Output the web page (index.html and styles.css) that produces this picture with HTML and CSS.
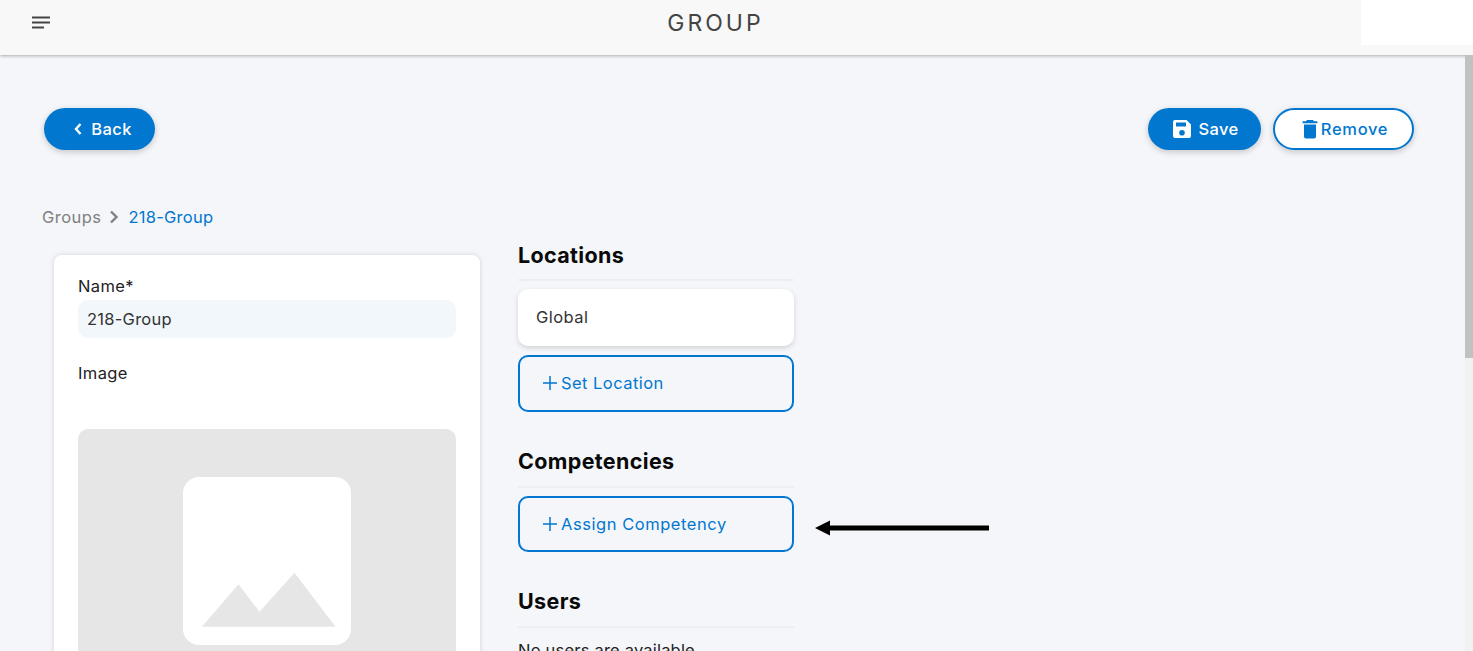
FILE: index.html
```html
<!DOCTYPE html>
<html lang="en">
<head>
<meta charset="utf-8">
<title>Group</title>
<link rel="stylesheet" href="styles.css">
</head>
<body>
<header class="topbar">
  <button class="menu" aria-label="Menu">
    <svg width="20" height="14" viewBox="0 0 20 14"><path d="M1 1.5h18M1 6.5h18M1 11.5h12" stroke="#444" stroke-width="1.8" fill="none"/></svg>
  </button>
  <div class="title">GROUP</div>
  <div class="corner"></div>
</header>
<div class="scrollbar"><div class="thumb"></div></div>
<main class="page">
  <div class="actions">
    <button class="pill solid back">
      <svg width="10" height="14" viewBox="0 0 10 14"><path d="M6.500 2 L2 7 L6.500 12" stroke="#fff" stroke-width="2.400" fill="none"/></svg>
      <span>Back</span>
    </button>
    <div class="actions-right">
      <button class="pill solid save">
        <svg width="20" height="20" viewBox="0 0 20 20"><path fill="#fff" fill-rule="evenodd" d="M3 1h11.500L19 5.500V17a2 2 0 0 1-2 2H3a2 2 0 0 1-2-2V3a2 2 0 0 1 2-2zM4 3.500v4h10v-4zM10 11a2.800 2.800 0 1 0 0 5.600A2.800 2.800 0 0 0 10 11z"/></svg>
        <span>Save</span>
      </button>
      <button class="pill outline remove">
        <svg width="16" height="20" viewBox="0 0 16 20"><path fill="#0277cf" d="M5 1h6l1 1.200h3.400v2H.6v-2H4zM2 5.500h12V17.500a2 2 0 0 1-2 2H4a2 2 0 0 1-2-2z"/></svg>
        <span>Remove</span>
      </button>
    </div>
  </div>
  <nav class="crumbs">
    <span class="crumb-root">Groups</span>
    <svg width="12" height="16" viewBox="0 0 12 16"><path d="M3 2.500 L8.500 8 L3 13.500" stroke="#808080" stroke-width="2.400" fill="none"/></svg>
    <span class="crumb-current">218-Group</span>
  </nav>
  <div class="columns">
    <section class="card">
      <div class="label">Name*</div>
      <div class="field">218-Group</div>
      <div class="label image-label">Image</div>
      <div class="placeholder">
        <svg width="168" height="168" viewBox="0 0 168 168"><rect width="168" height="168" rx="16" fill="#fff"/><path d="M18.800 149.700 L55.500 107.300 L76.500 134.700 L111.500 95.700 L152.500 149.700 Z" fill="#e6e6e6"/></svg>
      </div>
    </section>
    <section class="side">
      <h2 class="heading">Locations</h2>
      <div class="tile">Global</div>
      <button class="add add-location"><svg class="plus" width="16" height="16" viewBox="0 0 16 16"><path d="M8 1v14M1 8h14" stroke="#0277cf" stroke-width="1.500"/></svg><span>Set Location</span></button>
      <h2 class="heading tall">Competencies</h2>
      <div class="add-row">
        <button class="add assign"><svg class="plus" width="16" height="16" viewBox="0 0 16 16"><path d="M8 1v14M1 8h14" stroke="#0277cf" stroke-width="1.500"/></svg><span>Assign Competency</span></button>
        <svg class="arrow" width="175" height="16" viewBox="0 0 175 16"><path d="M0 8 L15 .5 V5.500 H174 V10.500 H15 V15.500 Z" fill="#000"/></svg>
      </div>
      <h2 class="heading tall users">Users</h2>
      <p class="empty">No users are available</p>
    </section>
  </div>
</main>
</body>
</html>
```
FILE: styles.css
```css
* { box-sizing: border-box; }
html, body { margin: 0; height: 651px; overflow: hidden; }
body { background: #f4f6fa; font-family: Inter, "Open Sans", sans-serif; color: #222; position: relative; }
button { font: inherit; cursor: pointer; }

.topbar { height: 55px; background: #f8f8f8; box-shadow: 0 1px 3px rgba(0,0,0,.3); display: flex; align-items: flex-start; position: relative; }
.menu { background: none; border: 0; padding: 0; margin: 16px 0 0 31px; width: 20px; height: 14px; display: flex; }
.title { position: absolute; left: 0; width: 1431px; top: 9px; text-align: center; font-size: 23px; line-height: 28px; letter-spacing: 3px; color: #444; }
.corner { position: absolute; right: 0; top: 0; width: 112px; height: 45px; background: #fff; }
.scrollbar { position: absolute; top: 55px; right: 0; bottom: 0; width: 8px; background: #f1f1f1; }
.thumb { height: 303px; background: #c1c1c1; }

.page { padding: 53px 59px 0 44px; }
.actions { display: flex; justify-content: space-between; }
.actions-right { display: flex; gap: 12px; }
.pill { height: 42px; border-radius: 21px; display: flex; align-items: center; justify-content: center; font-size: 16.500px; font-weight: 500; letter-spacing: .4px; box-shadow: 0 2px 6px rgba(0,0,0,.2); padding: 0; }
.solid { background: #0277cf; border: 0; color: #fff; }
.outline { background: #fff; border: 2px solid #0277cf; color: #0277cf; }
.back { width: 111px; gap: 7px; padding-left: 7px; }
.save { width: 113px; gap: 6px; padding-left: 2px; }
.remove { width: 141px; gap: 3px; padding-left: 3px; letter-spacing: .7px; }

.crumbs { display: flex; align-items: center; gap: 7px; margin: 55px 0 0 -2px; height: 24px; font-size: 16.500px; letter-spacing: .45px; }
.crumb-root { color: #808080; }
.crumb-current { color: #0277cf; margin-left: 1px; letter-spacing: .25px; }

.columns { display: flex; align-items: flex-start; gap: 38px; margin: 26px 0 0 10px; }
.card { width: 426px; height: 500px; background: #fff; border-radius: 8px; box-shadow: 0 0 5px rgba(0,0,0,.15); padding: 20px 24px; flex: none; }
.label { font-size: 16.500px; line-height: 22px; color: #222; letter-spacing: .4px; }
.field { height: 38px; margin-top: 3px; background: #f2f7fc; border-radius: 10px; padding: 0 9px; font-size: 16.500px; line-height: 38px; color: #333; letter-spacing: .25px; }
.image-label { margin-top: 24px; }
.placeholder { margin-top: 45px; height: 300px; background: #e6e6e6; border-radius: 10px; display: flex; justify-content: center; padding-top: 48px; }

.side { width: 276px; flex: none; margin-top: -15px; }
.heading { margin: 0; height: 41px; font-size: 21.500px; line-height: 30px; font-weight: 700; color: #0a0a0a; letter-spacing: .35px; border-bottom: 2px solid #eceef1; }
.tall { height: 42px; }
.tile { height: 57px; margin-top: 8px; background: #fff; border-radius: 10px; box-shadow: 0 2px 5px rgba(0,0,0,.15); padding: 0 18px; font-size: 16.500px; line-height: 56px; color: #333; letter-spacing: .45px; }
.add { display: flex; align-items: center; gap: 3px; width: 276px; height: 57px; background: none; border: 2px solid #0277cf; border-radius: 10px; padding: 0 0 1px 22px; font-size: 16.500px; letter-spacing: .45px; color: #0277cf; flex: none; }
.assign { height: 56px; letter-spacing: .55px; padding-bottom: 0; }
.add-location { margin: 9px 0 34px; }
.add-row { display: flex; align-items: center; margin-top: 8px; position: relative; }
.arrow { position: absolute; left: 297px; top: 24px; }
.users { margin-top: 34px; }
.empty { margin: 12px 0 0; font-size: 16.500px; color: #222; letter-spacing: .2px; }
```
